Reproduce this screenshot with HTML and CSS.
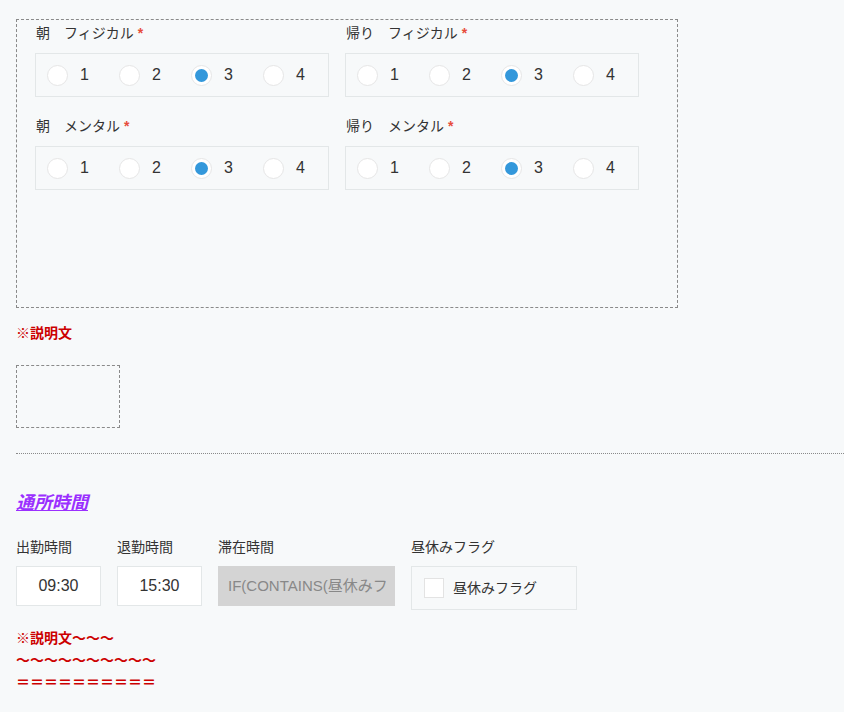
FILE: index.html
```
<!DOCTYPE html>
<html lang="ja">
<head>
<meta charset="utf-8">
<link rel="stylesheet" href="styles.css">
</head>
<body>
<div class="page">
  <div class="group">
    <div class="grid">
      <div class="field">
        <div class="label">朝　フィジカル<span class="req">*</span></div>
        <div class="radios">
          <span class="opt"><span class="radio"></span>1</span>
          <span class="opt"><span class="radio"></span>2</span>
          <span class="opt"><span class="radio on"></span>3</span>
          <span class="opt"><span class="radio"></span>4</span>
        </div>
      </div>
      <div class="field">
        <div class="label">帰り　フィジカル<span class="req">*</span></div>
        <div class="radios">
          <span class="opt"><span class="radio"></span>1</span>
          <span class="opt"><span class="radio"></span>2</span>
          <span class="opt"><span class="radio on"></span>3</span>
          <span class="opt"><span class="radio"></span>4</span>
        </div>
      </div>
      <div class="field">
        <div class="label">朝　メンタル<span class="req">*</span></div>
        <div class="radios">
          <span class="opt"><span class="radio"></span>1</span>
          <span class="opt"><span class="radio"></span>2</span>
          <span class="opt"><span class="radio on"></span>3</span>
          <span class="opt"><span class="radio"></span>4</span>
        </div>
      </div>
      <div class="field">
        <div class="label">帰り　メンタル<span class="req">*</span></div>
        <div class="radios">
          <span class="opt"><span class="radio"></span>1</span>
          <span class="opt"><span class="radio"></span>2</span>
          <span class="opt"><span class="radio on"></span>3</span>
          <span class="opt"><span class="radio"></span>4</span>
        </div>
      </div>
    </div>
  </div>

  <p class="note">※説明文</p>
  <div class="blank-box"></div>
  <div class="divider"></div>

  <h2 class="section-title">通所時間</h2>

  <div class="row">
    <div class="tfield">
      <div class="tlabel">出勤時間</div>
      <div class="input w85">09:30</div>
    </div>
    <div class="tfield">
      <div class="tlabel">退勤時間</div>
      <div class="input w85">15:30</div>
    </div>
    <div class="tfield">
      <div class="tlabel">滞在時間</div>
      <div class="input calc"><span class="calc-text">IF(CONTAINS(昼休みフラグ, "昼休みフラグ"), 退勤時間 - 出勤時間 - 3600, 退勤時間 - 出勤時間)</span></div>
    </div>
    <div class="tfield">
      <div class="tlabel">昼休みフラグ</div>
      <div class="checks"><span class="checkbox"></span><span class="check-label">昼休みフラグ</span></div>
    </div>
  </div>

  <div class="note2">※説明文〜〜〜<br>〜〜〜〜〜〜〜〜〜〜<br>＝＝＝＝＝＝＝＝＝＝</div>
</div>
</body>
</html>
```

FILE: styles.css
```
html, body {
  margin: 0;
  padding: 0;
  background: #f7f9fa;
}
body {
  font-family: "Liberation Sans", "Noto Sans CJK JP", sans-serif;
  color: #333;
  font-size: 14px;
}
.page {
  padding: 19px 0 0 16px;
}
.group {
  box-sizing: border-box;
  width: 662px;
  height: 289px;
  border: 1px dashed #8a8a8a;
  padding: 3px 0 0 18px;
}
.grid {
  display: grid;
  grid-template-columns: 294px 294px;
  column-gap: 16px;
  row-gap: 19px;
}
.label {
  line-height: 20px;
  height: 20px;
  margin-bottom: 10px;
  padding-left: 1px;
  font-size: 14px;
  color: #333;
}
.req {
  color: #e74c3c;
  font-weight: bold;
  margin-left: 4px;
}
.radios {
  box-sizing: border-box;
  height: 44px;
  border: 1px solid #e3e7e8;
  display: flex;
  align-items: center;
  padding-left: 11px;
  overflow: hidden;
}
.opt {
  flex: 0 0 72px;
  display: flex;
  align-items: center;
  font-size: 16px;
  color: #333;
}
.radio {
  box-sizing: border-box;
  width: 21px;
  height: 21px;
  border-radius: 50%;
  background: #fff;
  border: 1px solid #e6e6e6;
  margin-right: 12px;
  display: flex;
  align-items: center;
  justify-content: center;
}
.radio.on::after {
  content: "";
  width: 13px;
  height: 13px;
  border-radius: 50%;
  background: #3498db;
}
.note {
  margin: 15px 0 0;
  line-height: 20px;
  font-size: 14px;
  font-weight: bold;
  color: #c00;
}
.blank-box {
  margin-top: 22px;
  box-sizing: border-box;
  width: 104px;
  height: 63px;
  border: 1px dashed #8a8a8a;
}
.divider {
  margin-top: 25px;
  border-top: 1px dotted #8a8a8a;
}
.section-title {
  margin: 36px 0 0;
  line-height: 26px;
  font-size: 18px;
  font-weight: bold;
  font-style: italic;
  text-decoration: underline;
  color: #9b30ff;
}
.row {
  margin-top: 21px;
  display: flex;
  gap: 16px;
  align-items: flex-start;
}
.tlabel {
  line-height: 20px;
  height: 20px;
  margin-bottom: 9px;
  font-size: 14px;
}
.input {
  box-sizing: border-box;
  height: 40px;
  line-height: 38px;
  border: 1px solid #e3e7e8;
  background: #fff;
  text-align: center;
  font-size: 16px;
  color: #333;
}
.w85 { width: 85px; }
.input.calc {
  width: 177px;
  background: #d4d4d4;
  border-color: #d4d4d4;
  color: #888;
  text-align: left;
  padding: 0 8px 0 9px;
  overflow: hidden;
  font-size: 15px;
}
.calc-text {
  display: block;
  white-space: nowrap;
  overflow: hidden;
}
.checks {
  box-sizing: border-box;
  width: 166px;
  height: 44px;
  border: 1px solid #e3e7e8;
  display: flex;
  align-items: center;
  padding-left: 12px;
  font-size: 14px;
}
.checkbox {
  flex: 0 0 20px;
  box-sizing: border-box;
  width: 20px;
  height: 20px;
  background: #fff;
  border: 1px solid #e3e3e3;
  margin-right: 9px;
}
.check-label {
  line-height: 20px;
}
.note2 {
  margin-top: 17px;
  line-height: 22px;
  font-size: 14px;
  font-weight: bold;
  color: #c00;
}
```
